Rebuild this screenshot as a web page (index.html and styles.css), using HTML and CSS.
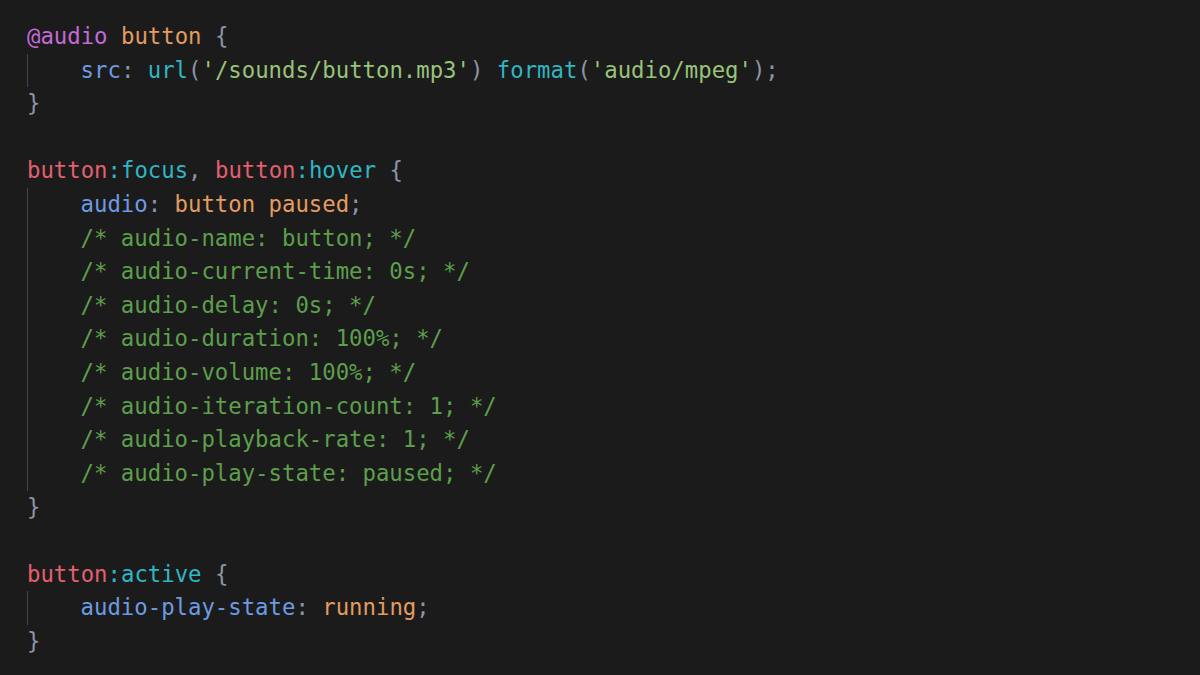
FILE: index.html
```html
<!DOCTYPE html>
<html>
<head>
<meta charset="utf-8">
<link rel="stylesheet" href="styles.css">
</head>
<body>
<div class="code">
  <div class="ln"><span class="at">@audio</span> <span class="val">button</span> <span class="pn">{</span></div>
  <div class="block">
    <div class="ln"><span class="prop">src</span><span class="pn">:</span> <span class="fn">url</span><span class="pn">(</span><span class="str">'/sounds/button.mp3'</span><span class="pn">)</span> <span class="fn">format</span><span class="pn">(</span><span class="str">'audio/mpeg'</span><span class="pn">);</span></div>
  </div>
  <div class="ln"><span class="pn">}</span></div>
  <div class="ln"></div>
  <div class="ln"><span class="sel">button</span><span class="ps">:focus</span><span class="pn">,</span> <span class="sel">button</span><span class="ps">:hover</span> <span class="pn">{</span></div>
  <div class="block">
    <div class="ln"><span class="prop">audio</span><span class="pn">:</span> <span class="val">button paused</span><span class="pn">;</span></div>
    <div class="ln cm">/* audio-name: button; */</div>
    <div class="ln cm">/* audio-current-time: 0s; */</div>
    <div class="ln cm">/* audio-delay: 0s; */</div>
    <div class="ln cm">/* audio-duration: 100%; */</div>
    <div class="ln cm">/* audio-volume: 100%; */</div>
    <div class="ln cm">/* audio-iteration-count: 1; */</div>
    <div class="ln cm">/* audio-playback-rate: 1; */</div>
    <div class="ln cm">/* audio-play-state: paused; */</div>
  </div>
  <div class="ln"><span class="pn">}</span></div>
  <div class="ln"></div>
  <div class="ln"><span class="sel">button</span><span class="ps">:active</span> <span class="pn">{</span></div>
  <div class="block">
    <div class="ln"><span class="prop">audio-play-state</span><span class="pn">:</span> <span class="val">running</span><span class="pn">;</span></div>
  </div>
  <div class="ln"><span class="pn">}</span></div>
</div>
</body>
</html>
```
FILE: styles.css
```css
html, body {
  margin: 0;
  padding: 0;
  background: #1b1b1c;
  width: 1200px;
  height: 675px;
  overflow: hidden;
}
.code {
  padding: 20px 0 0 27px;
  font-family: "DejaVu Sans Mono", "Liberation Mono", monospace;
  font-size: 22.3px;
  color: #c8ccd4;
}
.ln {
  height: 33.62px;
  line-height: 33.62px;
  white-space: pre;
}
.block {
  border-left: 1px solid #444547;
  padding-left: 52.6px;
}
.at { color: #c36ad6; }
.val { color: #e49c60; }
.pn { color: #8c95a6; }
.prop { color: #6d9be2; }
.fn { color: #2fb6c3; }
.str { color: #98c379; }
.sel { color: #e3606f; }
.ps { color: #2fb6c3; }
.cm { color: #5d9f4b; }
```
